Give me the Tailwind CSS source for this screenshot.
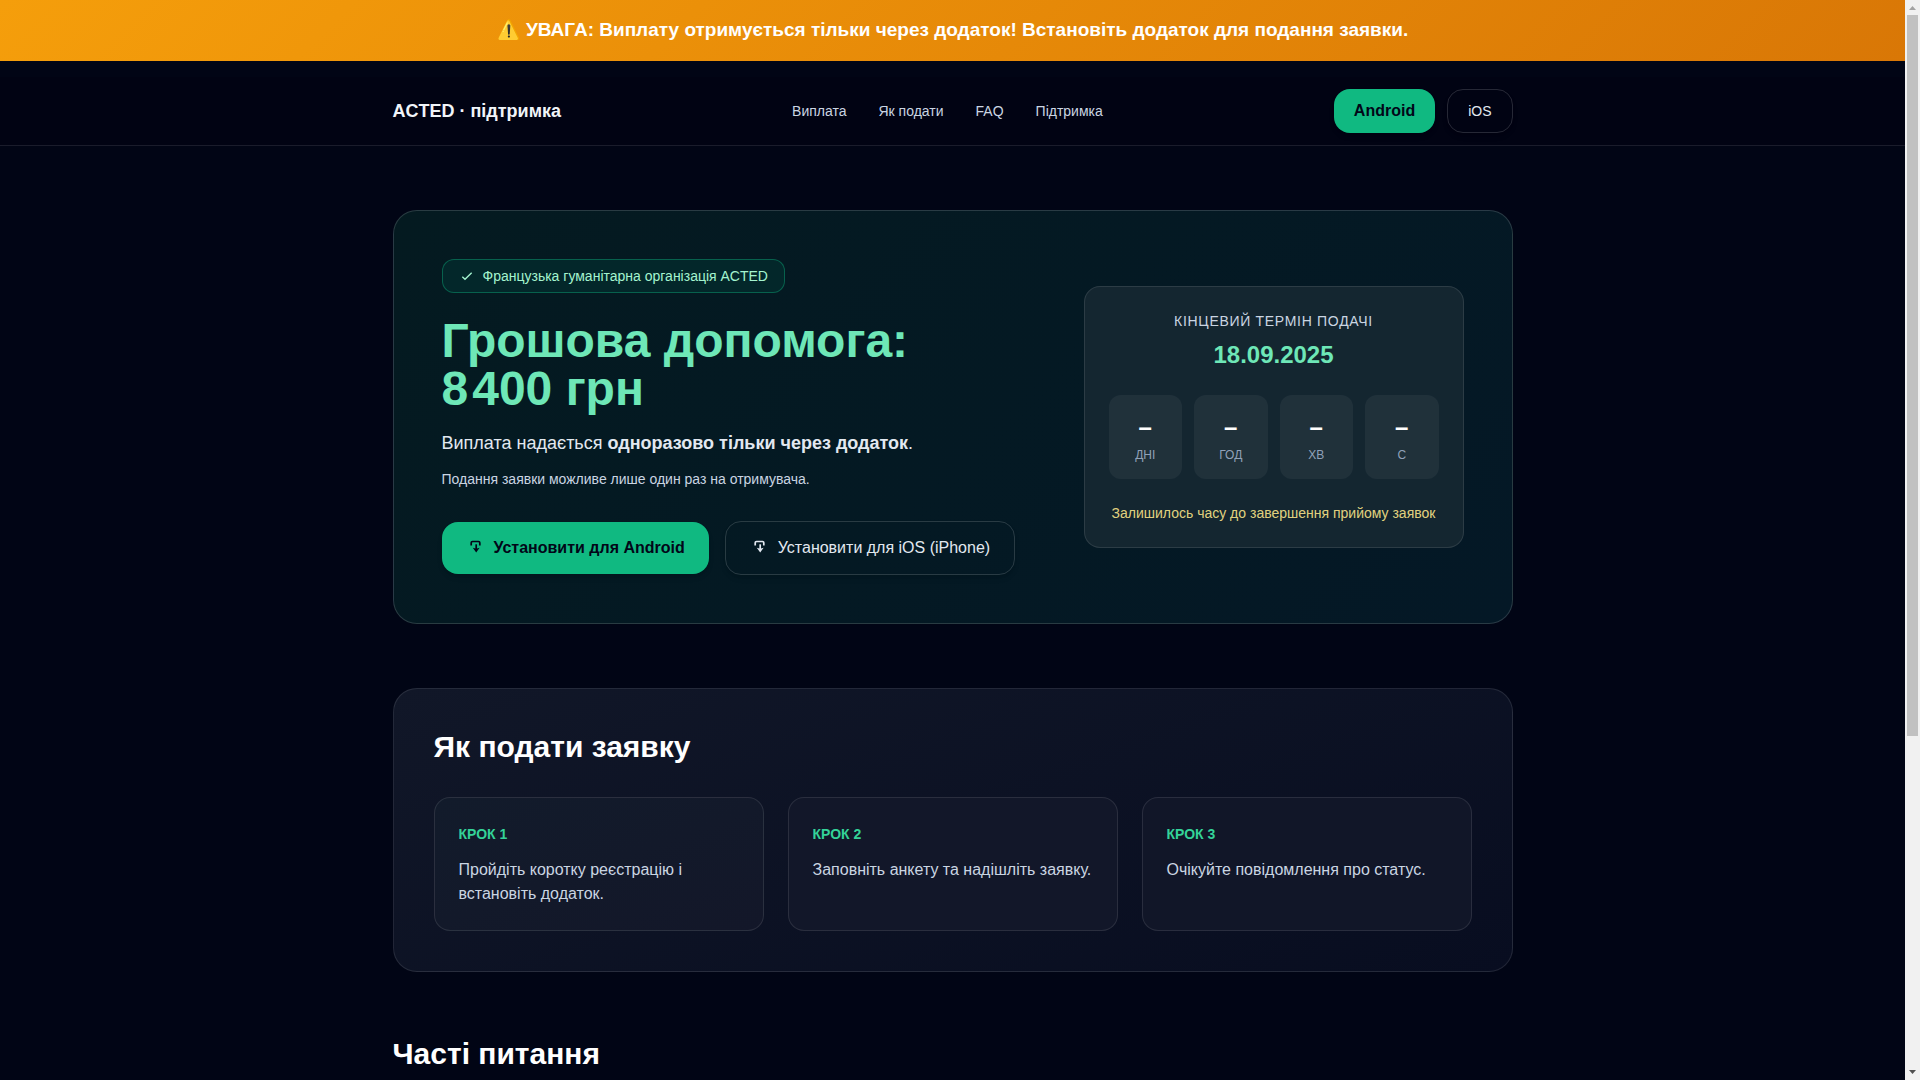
<!DOCTYPE html>
<html lang="uk">
<head>
  <meta charset="UTF-8">
  <meta name="viewport" content="width=device-width,initial-scale=1.0">
  <title>ACTED · підтримка</title>
  <script src="https://cdn.jsdelivr.net/npm/@tailwindcss/browser@4"></script>
</head>
<body class="pr-[15px] font-['Liberation_Sans',sans-serif] bg-[#010515] text-slate-100">
  <!-- Оголошення -->
  <div class="bg-linear-135 from-[#f59e0b] to-[#d97706] px-4 pt-4 pb-[17px] text-center text-[19px] leading-7 font-bold text-white">
    ⚠️ УВАГА: Виплату отримується тільки через додаток! Встановіть додаток для подання заявки.
  </div>

  <!-- Navbar -->
  <header class="mt-4 border-b border-white/10 bg-[#010313]">
    <div class="max-w-6xl mx-auto px-4 py-3 flex items-center justify-between">
      <a href="#" class="text-lg font-bold">ACTED · підтримка</a>
      <nav>
        <ul class="flex gap-8 text-sm text-slate-300">
          <li><a href="#payment" class="hover:text-white">Виплата</a></li>
          <li><a href="#how" class="hover:text-white">Як подати</a></li>
          <li><a href="#faq" class="hover:text-white">FAQ</a></li>
          <li><a href="#support" class="hover:text-white">Підтримка</a></li>
        </ul>
      </nav>
      <div class="flex gap-3">
        <a href="#android" class="h-11 px-5 flex items-center rounded-2xl bg-[#10b981] font-bold text-slate-950 shadow-md">Android</a>
        <a href="#ios" class="h-11 px-5 flex items-center rounded-2xl border border-white/15 text-sm text-slate-200 shadow-md">iOS</a>
      </div>
    </div>
  </header>

  <main class="max-w-6xl mx-auto px-4 py-16">
    <!-- Hero -->
    <section id="payment" class="grid grid-cols-[1fr_380px] items-center gap-10 p-12 rounded-3xl border border-white/15 bg-linear-135 from-[#041a20] to-[#041826]">
      <div>
        <div class="inline-flex items-center gap-2 h-[34px] px-4 rounded-xl border border-[#10b981]/40 bg-[#03272a] text-sm text-emerald-200 align-top">
          <svg class="size-4" viewBox="0 0 24 24" fill="none" stroke="currentColor" stroke-width="2"><path d="M5 13l4 4L19 7"/></svg>
          Французька гуманітарна організація ACTED
        </div>
        <h1 class="mt-6 text-5xl leading-12 font-bold text-[#6ee7b7]">Грошова допомога:<br>8&#8202;400 грн</h1>
        <p class="mt-4 text-lg leading-7 text-slate-200">Виплата надається <strong>одноразово тільки через додаток</strong>.</p>
        <p class="mt-3 text-sm text-slate-300">Подання заявки можливе лише один раз на отримувача.</p>
        <div class="mt-8 flex items-center gap-4">
          <a href="#android" class="h-13 px-6 flex items-center gap-2 rounded-2xl bg-[#10b981] font-bold text-slate-950 shadow-md">
            <svg class="size-5" viewBox="0 0 20 20" fill="none" stroke="currentColor" stroke-width="1.7"><path d="M5.2 7.6V4.8a1.3 1.3 0 011.3-1.3h6a1.3 1.3 0 011.3 1.3v2.6"/><path d="M10.2 6.3v5"/><path fill="currentColor" stroke="none" d="M6.8 9.8l2.6.6h1.6l2.6-.6-3.4 4.6z"/></svg>
            Установити для Android
          </a>
          <a href="#ios" class="h-[54px] px-6 flex items-center gap-2 rounded-2xl border border-white/15 text-slate-200 shadow-md">
            <svg class="size-5" viewBox="0 0 20 20" fill="none" stroke="currentColor" stroke-width="1.7"><path d="M5.2 7.6V4.8a1.3 1.3 0 011.3-1.3h6a1.3 1.3 0 011.3 1.3v2.6"/><path d="M10.2 6.3v5"/><path fill="currentColor" stroke="none" d="M6.8 9.8l2.6.6h1.6l2.6-.6-3.4 4.6z"/></svg>
            Установити для iOS (iPhone)
          </a>
        </div>
      </div>

      <!-- Таймер -->
      <div class="p-6 rounded-2xl border border-white/10 bg-[#142630] text-center">
        <p class="text-sm tracking-wider uppercase text-slate-300">Кінцевий термін подачі</p>
        <p class="mt-2 text-2xl font-bold text-[#6ee7b7]">18.09.2025</p>
        <div class="mt-6 grid grid-cols-4 gap-3">
          <div class="py-4 rounded-xl bg-white/5">
            <div class="text-2xl font-bold text-white">–</div>
            <div class="mt-1 text-xs text-slate-400">ДНІ</div>
          </div>
          <div class="py-4 rounded-xl bg-white/5">
            <div class="text-2xl font-bold text-white">–</div>
            <div class="mt-1 text-xs text-slate-400">ГОД</div>
          </div>
          <div class="py-4 rounded-xl bg-white/5">
            <div class="text-2xl font-bold text-white">–</div>
            <div class="mt-1 text-xs text-slate-400">ХВ</div>
          </div>
          <div class="py-4 rounded-xl bg-white/5">
            <div class="text-2xl font-bold text-white">–</div>
            <div class="mt-1 text-xs text-slate-400">С</div>
          </div>
        </div>
        <p class="mt-6 text-sm whitespace-nowrap text-[#fde68a]/90">Залишилось часу до завершення прийому заявок</p>
      </div>
    </section>

    <!-- Кроки -->
    <section id="how" class="mt-16 p-10 rounded-3xl border border-white/10 bg-linear-160 from-[#111728] to-[#080d20]">
      <h2 class="text-3xl leading-9 font-bold text-white">Як подати заявку</h2>
      <div class="mt-8 grid grid-cols-3 gap-6">
        <div class="p-6 rounded-2xl border border-white/10 bg-linear-160 from-[#121b2b] to-[#131729]">
          <h3 class="text-sm leading-6 font-bold text-[#34d399]">КРОК 1</h3>
          <p class="mt-3 text-slate-300">Пройдіть коротку реєстрацію і встановіть додаток.</p>
        </div>
        <div class="p-6 rounded-2xl border border-white/10 bg-[#121729]">
          <h3 class="text-sm leading-6 font-bold text-[#34d399]">КРОК 2</h3>
          <p class="mt-3 text-slate-300">Заповніть анкету та надішліть заявку.</p>
        </div>
        <div class="p-6 rounded-2xl border border-white/10 bg-[#111628]">
          <h3 class="text-sm leading-6 font-bold text-[#34d399]">КРОК 3</h3>
          <p class="mt-3 text-slate-300">Очікуйте повідомлення про статус.</p>
        </div>
      </div>
    </section>

    <!-- FAQ -->
    <section id="faq" class="mt-16">
      <h2 class="text-3xl leading-9 font-bold text-white">Часті питання</h2>
    </section>
  </main>

  <!-- Смуга прокрутки -->
  <div class="fixed inset-y-0 right-0 w-[15px] flex flex-col bg-[#f1f1f1]" aria-hidden="true">
    <svg class="size-[15px]" viewBox="0 0 15 15" fill="#a3a3a3"><path d="M7.5 6L11 10H4z"/></svg>
    <div class="flex-1">
      <div class="h-[68.7%] mx-[2px] bg-[#c1c1c1]"></div>
    </div>
    <svg class="size-[15px]" viewBox="0 0 15 15" fill="#505050"><path d="M4 5h7L7.5 9z"/></svg>
  </div>
</body>
</html>
